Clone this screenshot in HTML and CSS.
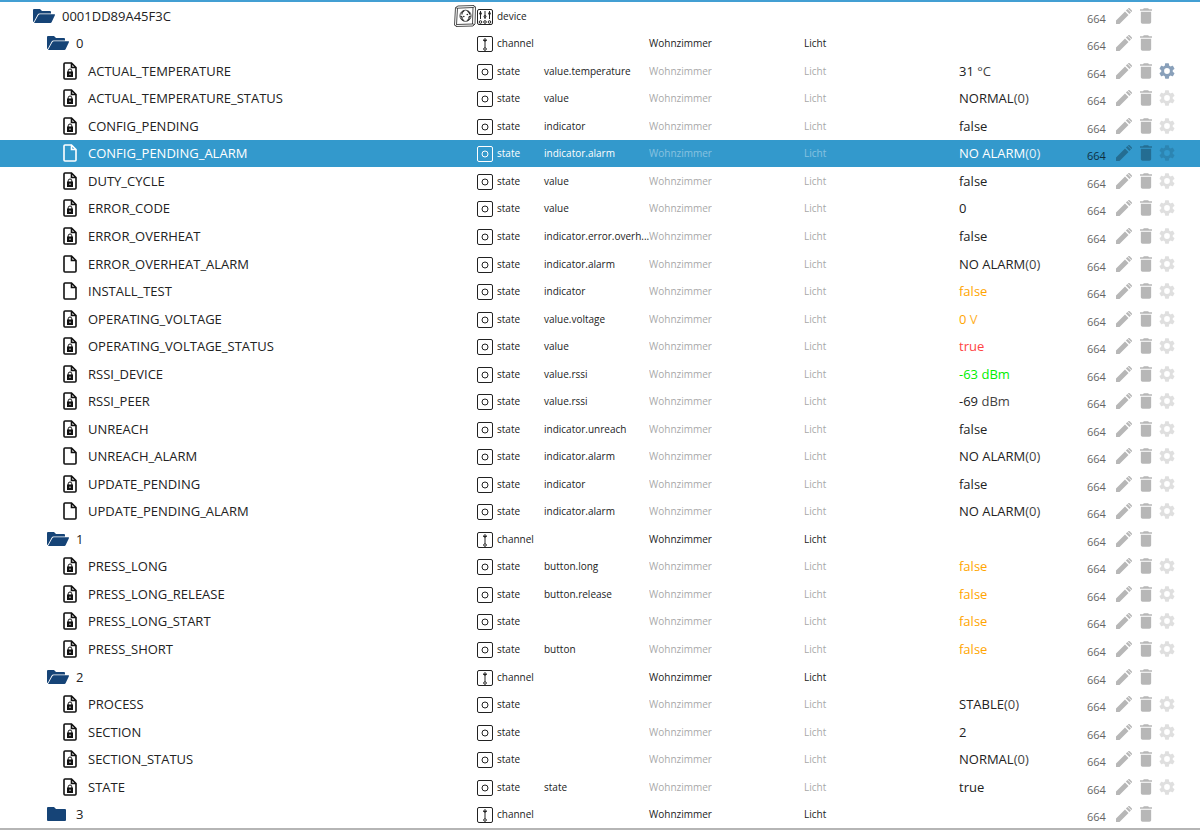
FILE: index.html
```
<!DOCTYPE html>
<html lang="en">
<head>
  <meta charset="UTF-8">
  <meta name="viewport" content="width=device-width, initial-scale=1.0">
  <title>Objects</title>
  <link rel="stylesheet" href="styles.css">
</head>
<body>
  <svg class="icon-defs" aria-hidden="true">
    <symbol id="folder-open" viewBox="0 0 22 14">
      <path d="M1 0h6l2 2h8a1 1 0 0 1 1 1v1.500H6.500a2 2 0 0 0-1.800 1L.800 12.800H0V1a1 1 0 0 1 1-1z"/>
      <path d="M7 5.200h14.300a.700.700 0 0 1 .6 1l-3.200 6.900a1.500 1.500 0 0 1-1.400.900H1L5.300 6.200A2 2 0 0 1 7 5.200z"/>
    </symbol>
    <symbol id="folder" viewBox="0 0 22 14">
      <path d="M1 0h6l2 2h9a1 1 0 0 1 1 1v10a1 1 0 0 1-1 1H1a1 1 0 0 1-1-1V1a1 1 0 0 1 1-1z"/>
    </symbol>
    <symbol id="file" viewBox="0 0 14 18">
      <path d="M2 1h6.500L13 5.500V16a1 1 0 0 1-1 1H2a1 1 0 0 1-1-1V2a1 1 0 0 1 1-1zM8.500 1v4.500H13" fill="none" stroke="currentColor" stroke-width="1.600"/>
    </symbol>
    <symbol id="file-lock" viewBox="0 0 14 18">
      <path d="M2 1h6.500L13 5.500V16a1 1 0 0 1-1 1H2a1 1 0 0 1-1-1V2a1 1 0 0 1 1-1zM8.500 1v4.500H13" fill="none" stroke="currentColor" stroke-width="1.600"/>
      <path d="M5.200 10V8.800a1.800 1.800 0 0 1 3.600 0V10" fill="none" stroke="currentColor"/>
      <path fill-rule="evenodd" d="M4 9.500h6V15H4zM6.500 11.500v1.400h1v-1.400z"/>
    </symbol>
    <symbol id="state" viewBox="0 0 16 16">
      <g fill="none" stroke="currentColor">
        <rect x=".5" y=".5" width="15" height="15" rx="1.500"/>
        <circle cx="8" cy="8" r="3"/>
      </g>
    </symbol>
    <symbol id="channel" viewBox="0 0 16 16">
      <g fill="none" stroke="currentColor">
        <rect x=".5" y=".5" width="15" height="15" rx="1.500"/>
        <circle cx="8" cy="4" r="1.200"/>
        <circle cx="8" cy="13" r="1.300"/>
        <path d="M8 4v7.500M6.300 4.500h3.400"/>
      </g>
    </symbol>
    <symbol id="device" viewBox="0 0 16 16">
      <g fill="none" stroke="currentColor">
        <rect x=".5" y=".5" width="15" height="15" rx="1.500"/>
        <path d="M3.500 2v8M8 2v8M12.500 2v8"/>
        <circle cx="3.500" cy="4.500" r="1"/>
        <circle cx="8" cy="7.500" r="1"/>
        <circle cx="12.500" cy="4.500" r="1"/>
        <circle cx="3.500" cy="13" r="1.300"/>
        <circle cx="8" cy="13" r="1.300"/>
        <circle cx="12.500" cy="13" r="1.300"/>
      </g>
    </symbol>
    <symbol id="socket" viewBox="0 0 22 22">
      <g fill="none" stroke="currentColor" stroke-width=".8">
        <path d="M1.500 2.500 4 1l16-.5 1.500 1.500-.5 17-2 2L2 21.500.500 20z"/>
        <path d="M3.500 3.200 19 2.500l-.5 16.500L2.500 19.500z"/>
        <path d="m19 2.500 2-1M18.500 19l2 .5M3.500 3.200 2 2.800M2.500 19.500 1.500 21"/>
        <circle cx="11.500" cy="10.800" r="5.600"/>
        <path d="M10 5.800 8 7.500v2M6.500 11l1.500 1v2.500l2 1M13.500 5.800 15.500 8v1.500M16.500 11l-1.500 1v2.500l-2 1" stroke-width="1.200"/>
      </g>
      <circle cx="9.800" cy="11.500" r=".8"/>
      <circle cx="13.300" cy="9.500" r=".8"/>
    </symbol>
    <symbol id="edit" viewBox="0 0 16 16">
      <path d="M0 16v-3.500l9-9L12.500 7l-9 9zM9.900 2.600l1.500-1.500 3.500 3.500-1.500 1.500zM11.900.700l.4-.4a1 1 0 0 1 1.400 0l2 2a1 1 0 0 1 0 1.400l-.4.400z"/>
    </symbol>
    <symbol id="trash" viewBox="5 3 14 18">
      <path d="M6 19c0 1.100.900 2 2 2h8c1.100 0 2-.900 2-2V7H6v12zM19 4h-3.500l-1-1h-5l-1 1H5v2h14V4z"/>
    </symbol>
    <symbol id="gear" viewBox="2 2 20 20">
      <path d="M19.140 12.940c.04-.3.060-.610.060-.940s-.02-.640-.07-.940l2.030-1.580a.490.490 0 0 0 .120-.610l-1.920-3.320a.488.488 0 0 0-.590-.220l-2.390.960c-.5-.380-1.030-.700-1.620-.940l-.360-2.540a.484.484 0 0 0-.480-.410h-3.840c-.240 0-.430.170-.470.410l-.360 2.540c-.590.240-1.130.570-1.620.940l-2.390-.960c-.220-.080-.470 0-.590.220L2.740 8.870c-.120.210-.080.470.120.610l2.030 1.580c-.05.300-.090.630-.090.940s.02.640.070.940l-2.030 1.580a.490.490 0 0 0-.120.610l1.920 3.320c.120.220.370.290.590.220l2.390-.960c.5.380 1.030.700 1.620.940l.360 2.540c.05.240.240.410.480.410h3.840c.240 0 .440-.170.470-.410l.360-2.540c.590-.240 1.130-.560 1.620-.940l2.390.960c.220.080.470 0 .590-.220l1.920-3.320c.120-.220.070-.470-.12-.610l-2.010-1.580zM12 15.600a3.600 3.600 0 1 1 0-7.200 3.600 3.600 0 0 1 0 7.200z"/>
    </symbol>
  </svg>

  <table class="objects">
    <colgroup>
      <col class="col-name">
      <col class="col-type">
      <col class="col-role">
      <col class="col-room">
      <col class="col-func">
      <col class="col-value">
      <col class="col-buttons">
    </colgroup>
    <tbody id="object-list"></tbody>
  </table>

  <script src="script.js"></script>
</body>
</html>
```

FILE: styles.css
```
* {
  box-sizing: border-box;
}

body {
  margin: 0;
  font-family: "Open Sans", "Noto Sans", sans-serif;
  font-size: 10px;
  color: #222;
  background-color: #fff;
}

.icon-defs {
  display: none;
}

svg {
  display: block;
  flex: none;
  fill: currentColor;
}

.objects {
  width: 100%;
  height: calc(100vh - 1px);
  table-layout: fixed;
  border-collapse: separate;
  border-spacing: 0;
  border-top: 2px solid #439fd3;
  border-bottom: 2px solid #b5b5b5;
}

.col-type {
  width: 90px;
}

.col-role {
  width: 105px;
}

.col-room,
.col-func {
  width: 155px;
}

.col-value {
  width: 128px;
}

.col-buttons {
  width: 113px;
}

td {
  padding: 0;
  line-height: 20px;
  vertical-align: middle;
  white-space: nowrap;
}

.name,
.value {
  font-size: 13px;
}

.cell {
  display: flex;
  align-items: center;
}

.level-0 {
  padding-left: 33px;
}

.level-1 {
  padding-left: 47px;
}

.level-2 {
  padding-left: 61px;
}

.icon-folder {
  width: 22px;
  height: 14px;
  margin-right: 7px;
  color: #164477;
}

.icon-file {
  width: 14px;
  height: 18px;
  margin: 0 11px 0 2px;
  color: #111;
}

.icon-type {
  width: 16px;
  height: 16px;
  margin: 2px 4px 0 23px;
}

.icon-socket {
  width: 22px;
  height: 22px;
}

.icon-socket + .icon-type {
  margin-left: 1px;
}

.inherited {
  opacity: 0.4;
}

.unit {
  opacity: 0.85;
}

.orange {
  color: #ffa500;
}

.red {
  color: #ff4444;
}

.green {
  color: #00ee00;
}

.green .unit {
  opacity: 1;
}

.buttons button {
  padding: 0;
  border: none;
  background: none;
  color: #000;
  opacity: 0.28;
  cursor: pointer;
}

.rights {
  width: 29px;
  padding-top: 6px;
  font-size: 11px;
  opacity: 0.7;
}

.icon-edit {
  width: 16px;
  height: 16px;
}

.icon-trash {
  width: 12px;
  height: 16px;
  margin: 0 7px 0 8px;
}

.icon-gear {
  width: 16px;
  height: 16px;
}

.buttons .custom {
  opacity: 0.12;
}

.buttons .custom-on {
  color: #164477;
  opacity: 0.5;
}

.selected td {
  background-color: #3399cc;
  color: #fff;
}

.selected .icon-file {
  color: #fff;
}

.selected .rights {
  color: #000;
}
```

FILE: script.js
```
// name, type, role, value, unit, options
var objects = [
  ['0001DD89A45F3C', 'device'],
  ['0', 'channel'],
  ['ACTUAL_TEMPERATURE', 'state', 'value.temperature', '31', ' °C', { custom: true }],
  ['ACTUAL_TEMPERATURE_STATUS', 'state', 'value', 'NORMAL', '(0)'],
  ['CONFIG_PENDING', 'state', 'indicator', 'false'],
  ['CONFIG_PENDING_ALARM', 'state', 'indicator.alarm', 'NO ALARM', '(0)', { file: true, selected: true }],
  ['DUTY_CYCLE', 'state', 'value', 'false'],
  ['ERROR_CODE', 'state', 'value', '0'],
  ['ERROR_OVERHEAT', 'state', 'indicator.error.overh...', 'false'],
  ['ERROR_OVERHEAT_ALARM', 'state', 'indicator.alarm', 'NO ALARM', '(0)', { file: true }],
  ['INSTALL_TEST', 'state', 'indicator', 'false', '', { file: true, color: 'orange' }],
  ['OPERATING_VOLTAGE', 'state', 'value.voltage', '0', ' V', { color: 'orange' }],
  ['OPERATING_VOLTAGE_STATUS', 'state', 'value', 'true', '', { color: 'red' }],
  ['RSSI_DEVICE', 'state', 'value.rssi', '-63', ' dBm', { color: 'green' }],
  ['RSSI_PEER', 'state', 'value.rssi', '-69', ' dBm'],
  ['UNREACH', 'state', 'indicator.unreach', 'false'],
  ['UNREACH_ALARM', 'state', 'indicator.alarm', 'NO ALARM', '(0)', { file: true }],
  ['UPDATE_PENDING', 'state', 'indicator', 'false'],
  ['UPDATE_PENDING_ALARM', 'state', 'indicator.alarm', 'NO ALARM', '(0)', { file: true }],
  ['1', 'channel'],
  ['PRESS_LONG', 'state', 'button.long', 'false', '', { color: 'orange' }],
  ['PRESS_LONG_RELEASE', 'state', 'button.release', 'false', '', { color: 'orange' }],
  ['PRESS_LONG_START', 'state', '', 'false', '', { color: 'orange' }],
  ['PRESS_SHORT', 'state', 'button', 'false', '', { color: 'orange' }],
  ['2', 'channel'],
  ['PROCESS', 'state', '', 'STABLE', '(0)'],
  ['SECTION', 'state', '', '2'],
  ['SECTION_STATUS', 'state', '', 'NORMAL', '(0)'],
  ['STATE', 'state', 'state', 'true'],
  ['3', 'channel', '', '', '', { closed: true }]
];

var levels = { device: 0, channel: 1, state: 2 };

function icon(id, className) {
  return `<svg class="${className}" aria-hidden="true"><use href="#${id}"></use></svg>`;
}

function renderRow(object) {
  var [name, type, role = '', value = '', unit = '', options = {}] = object;
  var isState = type === 'state';
  var inherited = isState ? 'inherited' : '';
  var room = type === 'device' ? '' : 'Wohnzimmer';
  var func = type === 'device' ? '' : 'Licht';

  var nameIcon = isState
    ? icon(options.file ? 'file' : 'file-lock', 'icon-file')
    : icon(options.closed ? 'folder' : 'folder-open', 'icon-folder');
  var socket = type === 'device' ? icon('socket', 'icon-socket') : '';
  var custom = isState
    ? `<button class="custom ${options.custom ? 'custom-on' : ''}" aria-label="Settings">${icon('gear', 'icon-gear')}</button>`
    : '';

  return `
    <tr class="${options.selected ? 'selected' : ''}">
      <td class="name"><div class="cell level-${levels[type]}">${nameIcon}<span>${name}</span></div></td>
      <td><div class="cell">${socket}${icon(type, 'icon-type')}<span>${type}</span></div></td>
      <td>${role}</td>
      <td><span class="${inherited}">${room}</span></td>
      <td><span class="${inherited}">${func}</span></td>
      <td class="value ${options.color || ''}">${value}<span class="unit">${unit}</span></td>
      <td>
        <div class="cell buttons">
          <span class="rights">664</span>
          <button aria-label="Edit">${icon('edit', 'icon-edit')}</button>
          <button aria-label="Delete">${icon('trash', 'icon-trash')}</button>
          ${custom}
        </div>
      </td>
    </tr>
  `;
}

document.getElementById('object-list').innerHTML = objects.map(renderRow).join('');
```
